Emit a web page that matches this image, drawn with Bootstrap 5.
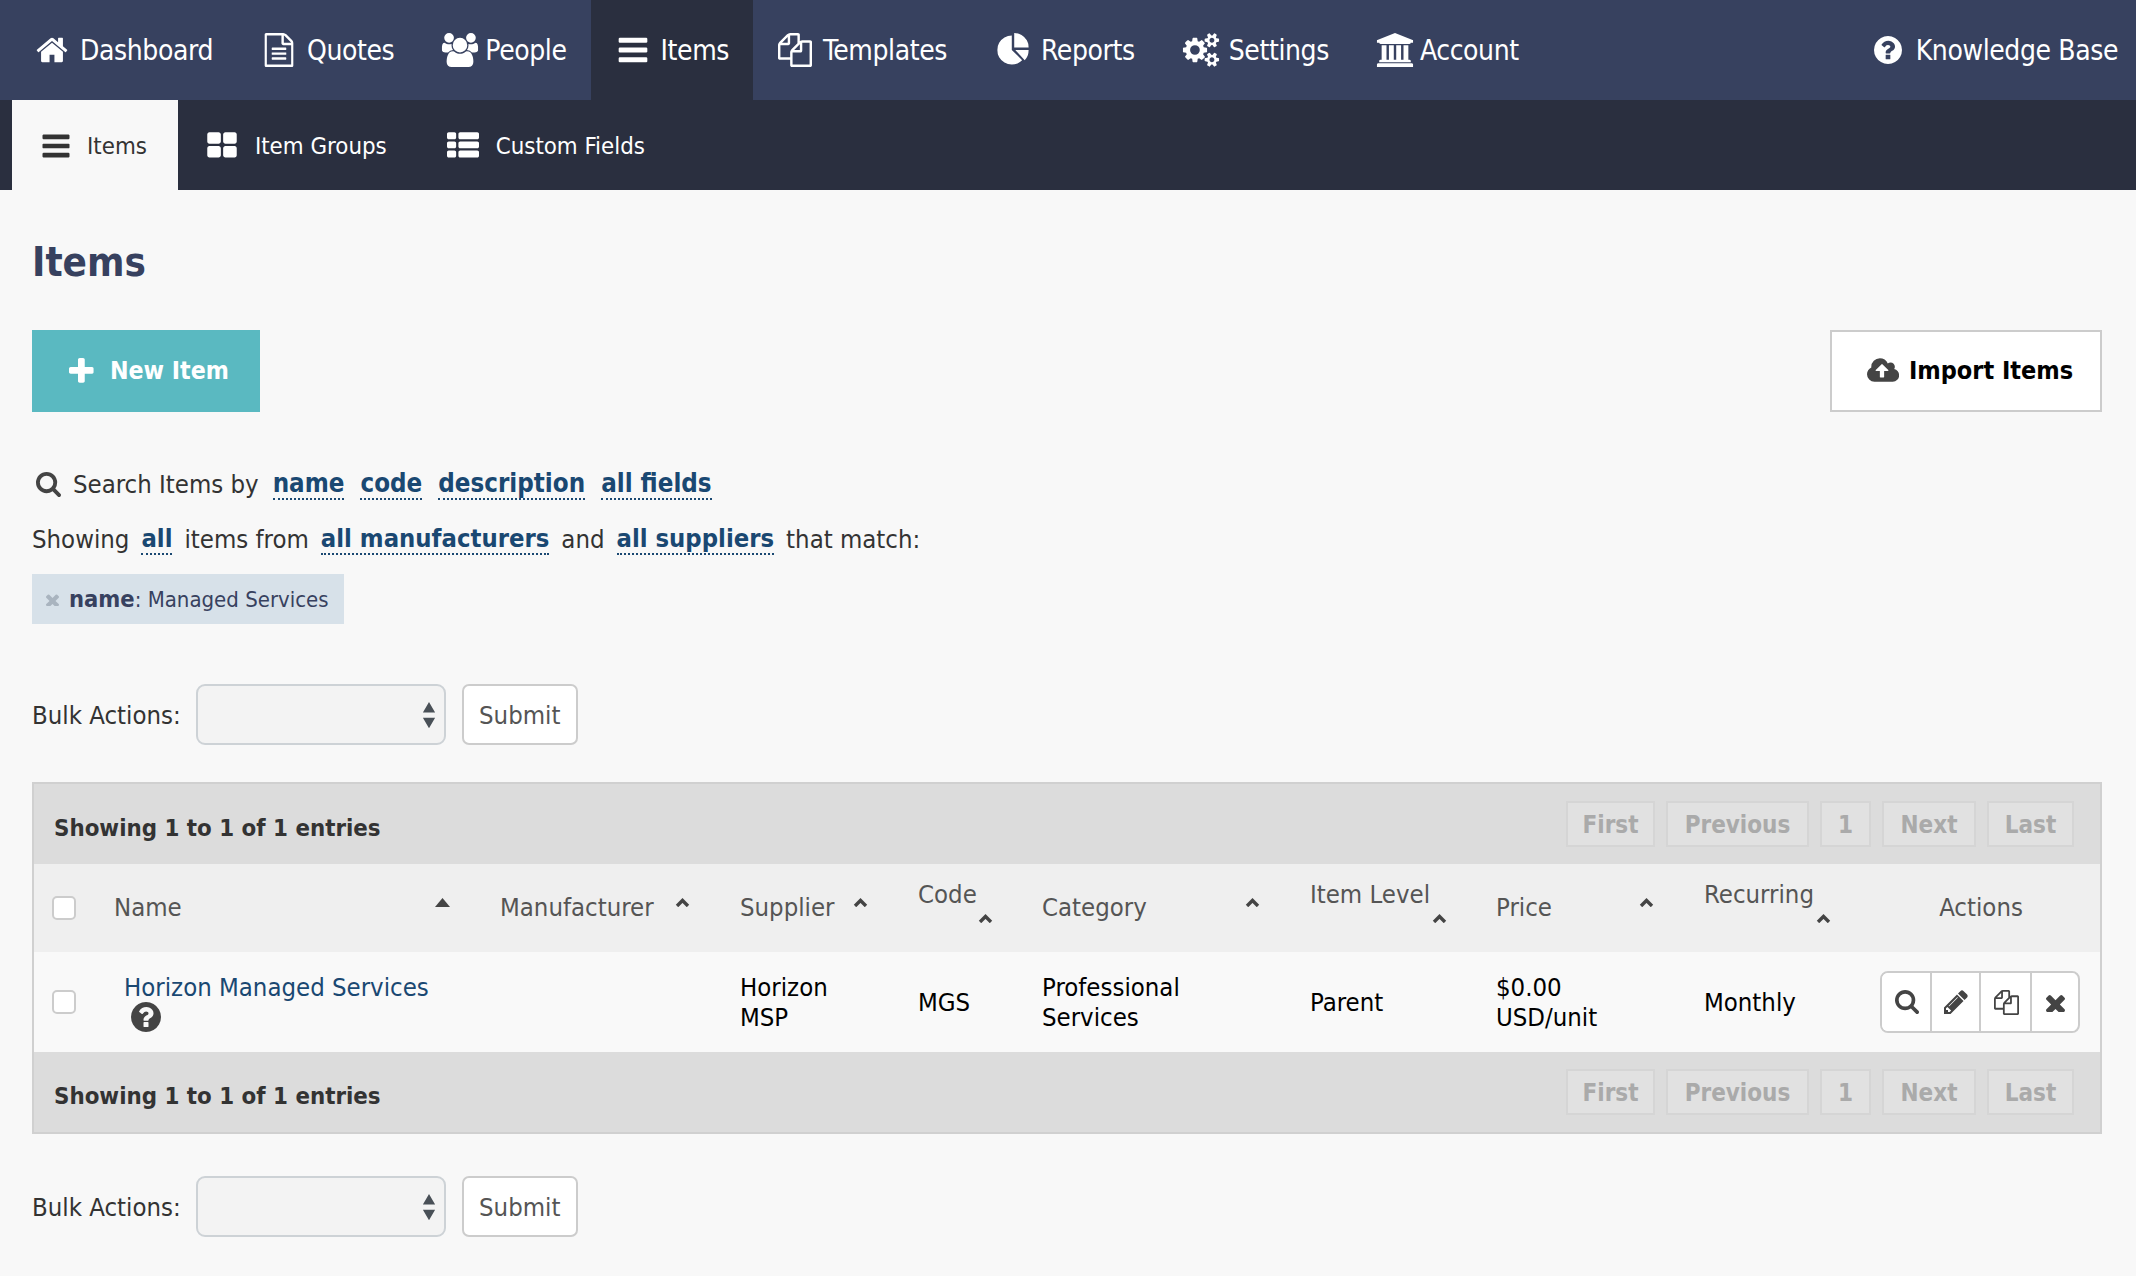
<!doctype html>
<html lang="en">
<head>
<meta charset="utf-8">
<title>Items</title>
<link href="https://cdn.jsdelivr.net/npm/bootstrap@5.3.0/dist/css/bootstrap.min.css" rel="stylesheet">
<style>
:root{--ink:#37415f;--deep:#2a2f3f;--link:#1a4872}
html,body{background:#f8f8f8}
body{font-family:"DejaVu Sans Condensed","DejaVu Sans",sans-serif;font-size:25.5px;line-height:30px;color:#333;min-height:1276px}
.ic{fill:currentColor;height:34px;flex:none;display:block}
.topbar{background:var(--ink);height:100px;padding-left:10px}
.topbar a{color:#fff;text-decoration:none;font-size:28px;letter-spacing:-.4px;height:100px;padding:2px 24px 0 23px;gap:9px}
.topbar a .ic{width:38px;margin-top:-2px}
.topbar a.on{background:var(--deep)}
.topbar a.tight{gap:6px}
.topbar a.kb{padding-right:18px;letter-spacing:-.4px}
.topbar a.kb .ic{height:28px}
.subbar{background:var(--deep);height:90px;padding-left:12px}
.subbar a{color:#fff;text-decoration:none;font-size:23.8px;height:90px;padding:2px 32px 0 26px;gap:15px}
.subbar a.on{background:#f8f8f8;color:#333;padding-right:31px;gap:13px}
.subbar .ic{height:32px;width:36px}
.pagebody{padding:49px 34px 39px 32px}
.pagebody h1{font-weight:700;font-size:40px;line-height:46px;color:var(--ink);margin:0 0 45px}
.act-add,.act-add:hover{background:#5ab9c1;color:#fff;border:0;border-radius:0;font-weight:700;font-size:24.7px;height:82px;width:228px;gap:16px;padding:0 0 0 6px}
.act-add .ic{height:27px}
.act-imp,.act-imp:hover{background:#fff;color:#000;border:2px solid #ccc;border-radius:0;font-weight:700;font-size:25px;height:82px;width:272px;gap:10px;padding:0 0 0 8px}
.act-imp .ic{height:30px;color:#444}
.filterline{height:40px;line-height:40px;white-space:nowrap;gap:12px}
.filterline a{color:var(--link);font-weight:700;font-size:25.7px;text-decoration:none;border-bottom:2px dotted var(--link);line-height:30px;display:inline-block}
.filterline a+a{margin-left:4px}
.filterline.fromline a{font-size:25.4px}
.filterline .ic{height:25px;color:#444}
.filterline .leadtxt{margin-right:2px}
.chip{background:#d7e1e9;color:var(--ink);height:50px;padding:0 14px;gap:10px;font-size:22px;margin-top:15px;width:312px;white-space:nowrap}
.chip .ic{height:13px;color:#a9b4bf}
.chip b{font-weight:700;font-size:23.5px}
.bulkrow{gap:16px}
.bulkrow label{margin-right:-1px}
.bulkrow .form-select{width:250px;height:61px;background-color:#f3f3f3;border:2px solid #cdd2d6;border-radius:9px;background-size:14px 28px;background-position:right 8px center;background-image:url("data:image/svg+xml,%3Csvg xmlns='http://www.w3.org/2000/svg' viewBox='0 0 16 32'%3E%3Cpath fill='%23495057' d='M8 1l7 12H1zM8 31L1 19h14z'/%3E%3C/svg%3E")}
.bulkrow .btn{background:#fff;border:2px solid #ccc;border-radius:7px;color:#555;font-size:25.5px;height:61px;width:116px;padding:1px 0 0}
.listpanel{background:#dcdcdc;border:2px solid #d0d0d0;margin:37px 0 42px}
.listbar{height:80px;padding:0 26px 0 20px}
.listbar strong{font-size:23.8px;color:#333;margin-top:7px}
.listbar .pagination{gap:12px;margin:0}
.listbar .page-link{background:#e1e1e1;border:2px solid #d5d5d5;border-radius:0!important;color:#aaa;font-weight:700;font-size:24px;height:46px;line-height:44px;padding:0;margin:0;text-align:center}
.pg-a{width:89px}.pg-b{width:143px}.pg-c{width:51px}.pg-d{width:94px}.pg-e{width:87px}
.listgrid{table-layout:fixed;margin:0;width:2066px;--bs-table-bg:transparent;color:#000}
.listgrid th,.listgrid td{border:0;vertical-align:middle;padding:0 0 0 12px;line-height:30px}
.listgrid thead tr{background:#efefef;height:88px}
.listgrid tbody tr{background:#f9f9f9;height:100px}
.listgrid th{font-weight:400;color:#555}
.listgrid .form-check-input{width:24px;height:24px;margin:0 0 0 6px;border:2px solid #ccc;background-color:#fff;border-radius:5px;display:block}
.sorthead{padding-right:38px;margin-top:-2px}
.sorthead .sortmark{width:15px;height:9px;fill:none;stroke:#444;stroke-width:3.4;flex:none;margin-top:-9px}
.sorthead .sortmark.fillup{fill:#444;stroke:none}
.sorthead.stack{padding-bottom:12px}
.sorthead.stack .sortmark{margin:5px -1px 0 0}
.listgrid th.acthead{padding:0 18px 2px 12px}
.listgrid td a{color:var(--link);text-decoration:none;margin-left:10px}
.helpmark{color:#444;height:30px;margin:0 0 0 17px}
.rowacts{border:2px solid #ccc;border-radius:8px;background:#fff;width:200px;height:62px;overflow:hidden}
.rowacts .btn{border:0;border-left:2px solid #ccc;border-radius:0;padding:0;color:#444;background:#fff;display:flex;align-items:center;justify-content:center;flex:none}
.rowacts .btn:first-child{border-left:0}
.rowacts .ra-a{width:49px}.rowacts .ra-b{width:50px}.rowacts .ra-c{width:52px}.rowacts .btn.ra-d{width:45px;padding-left:3px}
.rowacts .ic{height:24px}
.rowacts .ra-c .ic{height:25px}
.rowacts .ra-d .ic{height:19px}
</style>
</head>
<body>
<svg width="0" height="0" class="position-absolute">
<symbol id="i-home" viewBox="0 0 1792 1792"><path d="M1472 992v480q0 26-19 45t-45 19h-384v-384H768v384H384q-26 0-45-19t-19-45V992q0-1 .5-3t.5-3l575-474 575 474q1 2 1 6zm223-69l-62 74q-8 9-21 11h-3q-13 0-21-7L896 424l-692 577q-12 8-24 7-13-2-21-11l-62-74q-8-10-7-23.500t11-21.500l719-599q32-26 76-26t76 26l244 204V288q0-14 9-23t23-9h192q14 0 23 9t9 23v408l219 182q10 8 11 21.500t-7 23.500z"/></symbol>
<symbol id="i-file" viewBox="128 0 1536 1792"><path d="M1596 380q28 28 48 76t20 88v1152q0 40-28 68t-68 28H224q-40 0-68-28t-28-68V96q0-40 28-68t68-28h896q40 0 88 20t76 48zm-444-244v376h376q-10-29-22-41l-313-313q-12-12-41-22zm384 1528V640h-416q-40 0-68-28t-28-68V128H256v1536h1280zM512 800q0-14 9-23t23-9h704q14 0 23 9t9 23v64q0 14-9 23t-23 9H544q-14 0-23-9t-9-23v-64zm736 224q14 0 23 9t9 23v64q0 14-9 23t-23 9H544q-14 0-23-9t-9-23v-64q0-14 9-23t23-9h704zm0 256q14 0 23 9t9 23v64q0 14-9 23t-23 9H544q-14 0-23-9t-9-23v-64q0-14 9-23t23-9h704z"/></symbol>
<symbol id="i-group" viewBox="0 0 1920 1792"><path d="M593 896q-162 5-265 128H194q-82 0-138-40.500T0 865q0-353 124-353 6 0 43.500 21t97.500 42.500T384 597q67 0 133-23-5 37-5 66 0 139 81 256zm1071 637q0 120-73 189.500t-194 69.500H523q-121 0-194-69.500T256 1533q0-53 3.500-103.500t14-109T300 1212t43-97.500 62-81 85.500-53.500T602 960q10 0 43 21.500t73 48 107 48 135 21.500 135-21.500 107-48 73-48 43-21.500q61 0 111.500 20t85.500 53.500 62 81 43 97.500 26.500 108.500 14 109 3.500 103.500zM640 256q0 106-75 181t-181 75-181-75-75-181 75-181T384 0t181 75 75 181zm704 384q0 159-112.500 271.500T960 1024 688.500 911.500 576 640t112.500-271.500T960 256t271.500 112.500T1344 640zm576 225q0 78-56 118.500t-138 40.500h-134q-103-123-265-128 81-117 81-256 0-29-5-66 66 23 133 23 59 0 119-21.500t97.500-42.500 43.500-21q124 0 124 353zm-128-609q0 106-75 181t-181 75-181-75-75-181 75-181 181-75 181 75 75 181z"/></symbol>
<symbol id="i-bars" viewBox="128 0 1536 1792"><path d="M1664 1344v128q0 26-19 45t-45 19H192q-26 0-45-19t-19-45v-128q0-26 19-45t45-19h1408q26 0 45 19t19 45zm0-512v128q0 26-19 45t-45 19H192q-26 0-45-19t-19-45V832q0-26 19-45t45-19h1408q26 0 45 19t19 45zm0-512v128q0 26-19 45t-45 19H192q-26 0-45-19t-19-45V320q0-26 19-45t45-19h1408q26 0 45 19t19 45z"/></symbol>
<symbol id="i-files" viewBox="0 0 1792 1792"><path d="M1696 384q40 0 68 28t28 68v1216q0 40-28 68t-68 28H736q-40 0-68-28t-28-68v-288H96q-40 0-68-28t-28-68V640q0-40 20-88t48-76L476 68q28-28 76-48t88-20h416q40 0 68 28t28 68v328q68-40 128-40h416zm-544 213L853 896h299V597zM512 213L213 512h299V213zm196 647l316-316V128H640v416q0 40-28 68t-68 28H128v640h512v-256q0-40 20-88t48-76zm956 804V512h-384v416q0 40-28 68t-68 28H768v640h896z"/></symbol>
<symbol id="i-pie" viewBox="0 0 1664 1792"><path d="M768 890l546 546q-106 108-247.500 168T768 1664q-209 0-385.500-103T103 1281.500 0 896t103-385.500T382.500 231 768 128zm187 6h709q0 157-60 298.500T1450 1436zm709-128H896V0q209 0 385.500 103T1561 382.500 1664 768z"/></symbol>
<symbol id="i-cogs" viewBox="0 0 1920 1792"><path d="M896 896q0-106-75-181t-181-75-181 75-75 181 75 181 181 75 181-75 75-181zm768 512q0-52-38-90t-90-38-90 38-38 90q0 53 37.500 90.500T1536 1536t90.500-37.500T1664 1408zm0-1024q0-52-38-90t-90-38-90 38-38 90q0 53 37.500 90.500T1536 512t90.500-37.500T1664 384zm-384 421v185q0 10-7 19.500t-16 10.500l-155 24q-11 35-32 76 34 48 90 115 7 11 7 20 0 12-7 19-23 30-82.500 89.500T999 1423q-11 0-21-7l-115-90q-37 19-77 31-11 108-23 155-7 24-30 24H547q-11 0-20-7.500t-10-17.500l-23-153q-34-10-75-31l-118 89q-7 7-20 7-11 0-21-8-144-133-144-160 0-9 7-19 10-14 41-53t47-61q-23-44-35-82l-152-24q-10-1-17-9.500T0 987V802q0-10 7-19.500T23 772l155-24q11-35 32-76-34-48-90-115-7-11-7-20 0-12 7-20 22-30 82-89t79-59q11 0 21 7l115 90q34-18 77-32 11-108 23-154 7-24 30-24h186q11 0 20 7.500t10 17.500l23 153q34 10 75 31l118-89q8-7 20-7 11 0 21 8 144 133 144 160 0 8-7 19-12 16-42 54t-45 60q23 48 34 82l152 23q10 2 17 10.500t7 19.500zm640 533v140q0 16-149 31-12 27-30 52 51 113 51 138 0 4-4 7-122 71-124 71-8 0-46-47t-52-68q-20 2-30 2t-30-2q-14 21-52 68t-46 47q-2 0-124-71-4-3-4-7 0-25 51-138-18-25-30-52-149-15-149-31v-140q0-16 149-31 13-29 30-52-51-113-51-138 0-4 4-7 4-2 35-20t59-34 30-16q8 0 46 46.500t52 67.500q20-2 30-2t30 2q51-71 92-112l6-2q4 0 124 70 4 3 4 7 0 25-51 138 17 23 30 52 149 15 149 31zm0-1024v140q0 16-149 31-12 27-30 52 51 113 51 138 0 4-4 7-122 71-124 71-8 0-46-47t-52-68q-20 2-30 2t-30-2q-14 21-52 68t-46 47q-2 0-124-71-4-3-4-7 0-25 51-138-18-25-30-52-149-15-149-31V314q0-16 149-31 13-29 30-52-51-113-51-138 0-4 4-7 4-2 35-20t59-34 30-16q8 0 46 46.500t52 67.500q20-2 30-2t30 2q51-71 92-112l6-2q4 0 124 70 4 3 4 7 0 25-51 138 17 23 30 52 149 15 149 31z"/></symbol>
<symbol id="i-bank" viewBox="0 0 1920 1792"><path d="M960 0l960 384v128h-128q0 26-20.500 45t-48.500 19H197q-28 0-48.500-19T128 512H0V384zM256 640h256v768h128V640h256v768h128V640h256v768h128V640h256v768h59q28 0 48.500 19t20.500 45v64H128v-64q0-26 20.500-45t48.500-19h59V640zm1595 960q28 0 48.500 19t20.500 45v128H0v-128q0-26 20.500-45t48.500-19h1782z"/></symbol>
<symbol id="i-help" viewBox="128 128 1536 1536"><path d="M1024 1376v-192q0-14-9-23t-23-9H800q-14 0-23 9t-9 23v192q0 14 9 23t23 9h192q14 0 23-9t9-23zm256-672q0-88-55.500-163T1086 425t-170-41q-243 0-371 213-15 24 8 42l132 100q7 6 19 6 16 0 25-12 53-68 86-92 34-24 86-24 48 0 85.500 26t37.500 59q0 38-20 61t-68 45q-63 28-115.500 86.500T768 1020v36q0 14 9 23t23 9h192q14 0 23-9t9-23q0-19 21.500-49.500T1100 957q32-18 49-28.500t46-35 44.500-48 28-60.500 12.500-81zm384 192q0 209-103 385.500T1281.500 1561 896 1664t-385.500-103T231 1281.500 128 896t103-385.500T510.500 231 896 128t385.500 103T1561 510.500 1664 896z"/></symbol>
<symbol id="i-thl" viewBox="64 128 1664 1536"><path d="M832 1024v384q0 52-38 90t-90 38H192q-52 0-90-38t-38-90v-384q0-52 38-90t90-38h512q52 0 90 38t38 90zm0-768v384q0 52-38 90t-90 38H192q-52 0-90-38t-38-90V256q0-52 38-90t90-38h512q52 0 90 38t38 90zm896 768v384q0 52-38 90t-90 38h-512q-52 0-90-38t-38-90v-384q0-52 38-90t90-38h512q52 0 90 38t38 90zm0-768v384q0 52-38 90t-90 38h-512q-52 0-90-38t-38-90V256q0-52 38-90t90-38h512q52 0 90 38t38 90z"/></symbol>
<symbol id="i-thlist" viewBox="0 128 1792 1536"><path d="M512 1248v192q0 40-28 68t-68 28H96q-40 0-68-28t-28-68v-192q0-40 28-68t68-28h320q40 0 68 28t28 68zm0-512v192q0 40-28 68t-68 28H96q-40 0-68-28t-28-68V736q0-40 28-68t68-28h320q40 0 68 28t28 68zm1280 512v192q0 40-28 68t-68 28H736q-40 0-68-28t-28-68v-192q0-40 28-68t68-28h960q40 0 68 28t28 68zM512 224v192q0 40-28 68t-68 28H96q-40 0-68-28t-28-68V224q0-40 28-68t68-28h320q40 0 68 28t28 68zm1280 512v192q0 40-28 68t-68 28H736q-40 0-68-28t-28-68V736q0-40 28-68t68-28h960q40 0 68 28t28 68zm0-512v192q0 40-28 68t-68 28H736q-40 0-68-28t-28-68V224q0-40 28-68t68-28h960q40 0 68 28t28 68z"/></symbol>
<symbol id="i-search" viewBox="64 128 1664 1664"><path d="M1216 832q0-185-131.500-316.500T768 384 451.500 515.500 320 832t131.500 316.500T768 1280t316.500-131.500T1216 832zm512 832q0 52-38 90t-90 38q-54 0-90-38l-343-342q-179 124-399 124-143 0-273.500-55.500t-225-150-150-225T64 832t55.500-273.500 150-225 225-150T768 128t273.500 55.500 225 150 150 225T1472 832q0 220-124 399l343 343q37 37 37 90z"/></symbol>
<symbol id="i-plus" viewBox="192 128 1408 1536"><path d="M1600 736v192q0 40-28 68t-68 28h-416v416q0 40-28 68t-68 28H800q-40 0-68-28t-28-68v-416H288q-40 0-68-28t-28-68V736q0-40 28-68t68-28h416V224q0-40 28-68t68-28h192q40 0 68 28t28 68v416h416q40 0 68 28t28 68z"/></symbol>
<symbol id="i-cloud" viewBox="0 256 1920 1280"><path d="M1280 864q0-14-9-23L919 489q-9-9-23-9t-23 9L522 840q-10 12-10 24 0 14 9 23t23 9h224v352q0 13 9.500 22.500t22.500 9.500h192q13 0 22.500-9.500t9.500-22.500V896h224q13 0 22.500-9.500t9.500-22.500zm640 288q0 159-112.500 271.500T1536 1536H448q-185 0-316.500-131.500T0 1088q0-130 70-240t188-165q-2-30-2-43 0-212 150-362t362-150q156 0 285.500 87T1242 443q71-62 166-62 106 0 181 75t75 181q0 76-41 138 130 31 213.500 135.500T1920 1152z"/></symbol>
<symbol id="i-pencil" viewBox="128 128 1536 1536"><path d="M491 1536l91-91-235-235-91 91v107h128v128h107zm523-928q0-22-22-22-10 0-17 7l-542 542q-7 7-7 17 0 22 22 22 10 0 17-7l542-542q7-7 7-17zm-54-192l416 416-832 832H128v-416zm683 96q0 53-37 90l-166 166-416-416 166-165q36-38 90-38 53 0 91 38l235 234q37 39 37 91z"/></symbol>
<symbol id="i-times" viewBox="302 238 1188 1188"><path d="M1490 1322q0 40-28 68l-136 136q-28 28-68 28t-68-28l-294-294-294 294q-28 28-68 28t-68-28l-136-136q-28-28-28-68t28-68l294-294-294-294q-28-28-28-68t28-68l136-136q28-28 68-28t68 28l294 294 294-294q28-28 68-28t68 28l136 136q28 28 28 68t-28 68l-294 294 294 294q28 28 28 68z"/></symbol>
</svg>

<nav class="topbar d-flex align-items-center">
  <a class="d-flex align-items-center" href="#"><svg class="ic" viewBox="0 0 1792 1792"><use href="#i-home"/></svg>Dashboard</a>
  <a class="d-flex align-items-center" href="#"><svg class="ic" viewBox="0 0 1536 1792"><use href="#i-file"/></svg>Quotes</a>
  <a class="d-flex align-items-center tight" href="#"><svg class="ic" viewBox="0 0 1920 1792"><use href="#i-group"/></svg>People</a>
  <a class="d-flex align-items-center on" href="#"><svg class="ic" viewBox="0 0 1536 1792"><use href="#i-bars"/></svg>Items</a>
  <a class="d-flex align-items-center" href="#"><svg class="ic" viewBox="0 0 1792 1792"><use href="#i-files"/></svg>Templates</a>
  <a class="d-flex align-items-center" href="#"><svg class="ic" viewBox="0 0 1664 1792"><use href="#i-pie"/></svg>Reports</a>
  <a class="d-flex align-items-center" href="#"><svg class="ic" viewBox="0 0 1920 1792"><use href="#i-cogs"/></svg>Settings</a>
  <a class="d-flex align-items-center tight" href="#"><svg class="ic" viewBox="0 0 1920 1792"><use href="#i-bank"/></svg>Account</a>
  <a class="d-flex align-items-center ms-auto kb" href="#"><svg class="ic" viewBox="0 0 1536 1536"><use href="#i-help"/></svg>Knowledge Base</a>
</nav>
<nav class="subbar d-flex align-items-center">
  <a class="d-flex align-items-center on" href="#"><svg class="ic" viewBox="0 0 1536 1792"><use href="#i-bars"/></svg>Items</a>
  <a class="d-flex align-items-center" href="#"><svg class="ic" viewBox="0 0 1664 1792"><use href="#i-thl"/></svg>Item Groups</a>
  <a class="d-flex align-items-center" href="#"><svg class="ic" viewBox="0 0 1792 1792"><use href="#i-thlist"/></svg>Custom Fields</a>
</nav>

<main class="pagebody">
  <h1>Items</h1>
  <div class="d-flex justify-content-between">
    <button class="btn act-add d-flex align-items-center justify-content-center"><svg class="ic" viewBox="0 0 1408 1536"><use href="#i-plus"/></svg>New Item</button>
    <button class="btn act-imp d-flex align-items-center justify-content-center"><svg class="ic" viewBox="0 0 1920 1792"><use href="#i-cloud"/></svg>Import Items</button>
  </div>

  <div class="filterline d-flex align-items-center" style="margin-top:52px"><svg class="ic ms-1" viewBox="0 0 1664 1664"><use href="#i-search"/></svg><span class="leadtxt">Search Items by</span><a href="#">name</a><a href="#">code</a><a href="#">description</a><a href="#">all fields</a></div>
  <div class="filterline fromline d-flex align-items-center" style="margin-top:15px"><span>Showing</span><a href="#">all</a><span>items from</span><a href="#">all manufacturers</a><span>and</span><a href="#">all suppliers</a><span>that match:</span></div>
  <div class="chip d-flex align-items-center"><svg class="ic" viewBox="0 0 1188 1188"><use href="#i-times"/></svg><span><b>name</b>: Managed Services</span></div>

  <form class="bulkrow d-flex align-items-center" style="margin-top:60px">
    <label>Bulk Actions:</label>
    <select class="form-select"><option></option></select>
    <button type="button" class="btn">Submit</button>
  </form>

  <section class="listpanel">
    <div class="listbar d-flex align-items-center justify-content-between">
      <strong>Showing 1 to 1 of 1 entries</strong>
      <ul class="pagination"><li class="page-item disabled"><span class="page-link pg-a">First</span></li><li class="page-item disabled"><span class="page-link pg-b">Previous</span></li><li class="page-item disabled"><span class="page-link pg-c">1</span></li><li class="page-item disabled"><span class="page-link pg-d">Next</span></li><li class="page-item disabled"><span class="page-link pg-e">Last</span></li></ul>
    </div>
    <table class="table listgrid">
      <colgroup><col style="width:68px"><col style="width:386px"><col style="width:240px"><col style="width:178px"><col style="width:124px"><col style="width:268px"><col style="width:186px"><col style="width:208px"><col style="width:176px"><col></colgroup>
      <thead><tr>
        <th><input class="form-check-input" type="checkbox"></th>
        <th><div class="sorthead d-flex justify-content-between align-items-center"><span>Name</span><svg class="sortmark fillup" viewBox="0 0 15 9"><path d="M7.500 0L15 9H0z"/></svg></div></th>
        <th><div class="sorthead d-flex justify-content-between align-items-center"><span>Manufacturer</span><svg class="sortmark" viewBox="0 0 15 9"><path d="M2 8l5.500-5.500L13 8"/></svg></div></th>
        <th><div class="sorthead d-flex justify-content-between align-items-center"><span>Supplier</span><svg class="sortmark" viewBox="0 0 15 9"><path d="M2 8l5.500-5.500L13 8"/></svg></div></th>
        <th><div class="sorthead stack d-flex flex-column"><span>Code</span><svg class="sortmark align-self-end" viewBox="0 0 15 9"><path d="M2 8l5.500-5.500L13 8"/></svg></div></th>
        <th><div class="sorthead d-flex justify-content-between align-items-center"><span>Category</span><svg class="sortmark" viewBox="0 0 15 9"><path d="M2 8l5.500-5.500L13 8"/></svg></div></th>
        <th><div class="sorthead stack d-flex flex-column"><span>Item Level</span><svg class="sortmark align-self-end" viewBox="0 0 15 9"><path d="M2 8l5.500-5.500L13 8"/></svg></div></th>
        <th><div class="sorthead d-flex justify-content-between align-items-center"><span>Price</span><svg class="sortmark" viewBox="0 0 15 9"><path d="M2 8l5.500-5.500L13 8"/></svg></div></th>
        <th><div class="sorthead stack d-flex flex-column"><span>Recurring</span><svg class="sortmark align-self-end" viewBox="0 0 15 9"><path d="M2 8l5.500-5.500L13 8"/></svg></div></th>
        <th class="text-center acthead">Actions</th>
      </tr></thead>
      <tbody><tr>
        <td><input class="form-check-input" type="checkbox"></td>
        <td><a href="#">Horizon Managed Services</a><svg class="ic helpmark" viewBox="0 0 1536 1536"><use href="#i-help"/></svg></td>
        <td></td>
        <td>Horizon<br>MSP</td>
        <td>MGS</td>
        <td>Professional<br>Services</td>
        <td>Parent</td>
        <td>$0.00<br>USD/unit</td>
        <td>Monthly</td>
        <td><div class="btn-group rowacts"><button class="btn ra-a"><svg class="ic" viewBox="0 0 1664 1664"><use href="#i-search"/></svg></button><button class="btn ra-b"><svg class="ic" viewBox="0 0 1536 1536"><use href="#i-pencil"/></svg></button><button class="btn ra-c"><svg class="ic" viewBox="0 0 1792 1792"><use href="#i-files"/></svg></button><button class="btn ra-d"><svg class="ic" viewBox="0 0 1188 1188"><use href="#i-times"/></svg></button></div></td>
      </tr></tbody>
    </table>
    <div class="listbar lower d-flex align-items-center justify-content-between">
      <strong>Showing 1 to 1 of 1 entries</strong>
      <ul class="pagination"><li class="page-item disabled"><span class="page-link pg-a">First</span></li><li class="page-item disabled"><span class="page-link pg-b">Previous</span></li><li class="page-item disabled"><span class="page-link pg-c">1</span></li><li class="page-item disabled"><span class="page-link pg-d">Next</span></li><li class="page-item disabled"><span class="page-link pg-e">Last</span></li></ul>
    </div>
  </section>

  <form class="bulkrow d-flex align-items-center">
    <label>Bulk Actions:</label>
    <select class="form-select"><option></option></select>
    <button type="button" class="btn">Submit</button>
  </form>
</main>
<script src="https://cdn.jsdelivr.net/npm/bootstrap@5.3.0/dist/js/bootstrap.bundle.min.js"></script>
</body>
</html>
